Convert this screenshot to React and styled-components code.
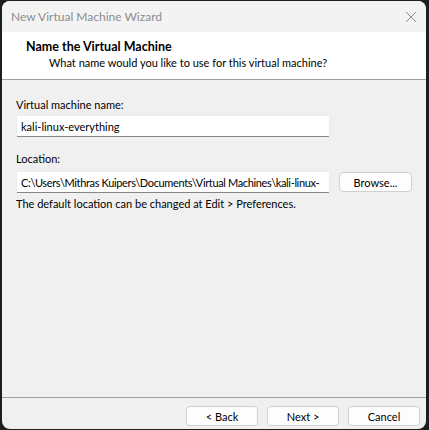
import React from "react";
import styled, { createGlobalStyle } from "styled-components";

const Global = createGlobalStyle`
  html, body { margin: 0; padding: 0; background: #1e1e1e; }
  body { width: 429px; height: 430px; overflow: hidden; font-family: Lato, "Liberation Sans", sans-serif; font-size: 11px; }
`;

const Window = styled.div`
  margin: 1px 3px 1px 2px;
  height: 428px;
  border-radius: 8px;
  overflow: hidden;
  background: #f0f0f0;
  display: flex;
  flex-direction: column;
`;

const TitleBar = styled.div`
  height: 31px;
  background: #f3f3f3;
  display: flex;
  align-items: center;
  justify-content: space-between;
  padding: 0 8px 0 9px;
`;

const TitleText = styled.span`
  color: #8c8c8c;
  font-size: 12px;
`;

const CloseButton = styled.div`
  width: 14px;
  height: 14px;
  display: flex;
  align-items: center;
  justify-content: center;
`;

const Header = styled.div`
  height: 48px;
  background: #ffffff;
  border-bottom: 1px solid #a0a0a0;
  display: flex;
  flex-direction: column;
  padding: 7px 0 0 24px;
  box-sizing: border-box;
`;

const HeaderTitle = styled.div`
  font-weight: bold;
  font-size: 12.5px;
  color: #000;
  line-height: 16px;
`;

const HeaderSub = styled.div`
  color: #000;
  line-height: 16px;
  padding-left: 23px;
`;

const Body = styled.div`
  flex: 1;
  padding: 17px 14px 0 14px;
  display: flex;
  flex-direction: column;
`;

const Label = styled.div`
  line-height: 16px;
  color: #000;
  margin-top: ${(p) => p.$top || 0}px;
`;

const Row = styled.div`
  display: flex;
  align-items: center;
  gap: 9px;
  margin-top: ${(p) => p.$top || 0}px;
`;

const TextBox = styled.div`
  width: 314px;
  height: 22px;
  box-sizing: border-box;
  background: #ffffff;
  border: 1px solid #ececec;
  border-bottom: 1px solid #868686;
  border-radius: 2px;
  padding: 0 3px 0 4px;
  display: flex;
  align-items: center;
  white-space: nowrap;
  overflow: hidden;
  color: #000;
  letter-spacing: ${(p) => (p.$tight ? "-0.35px" : "normal")};
  margin-top: ${(p) => p.$top || 0}px;
`;

const Button = styled.div`
  width: ${(p) => p.$w || 72}px;
  height: 20px;
  box-sizing: border-box;
  background: #fdfdfd;
  border: 1px solid #d0d0d0;
  border-radius: 4px;
  display: flex;
  align-items: center;
  justify-content: center;
  color: #000;
`;

const Footer = styled.div`
  border-top: 1px solid #a0a0a0;
  height: 32px;
  box-sizing: border-box;
  display: flex;
  justify-content: flex-end;
  align-items: flex-start;
  gap: 9px;
  padding: 8px 6px 0 0;
`;

export default function App() {
  return (
    <>
      <Global />
      <Window>
        <TitleBar>
          <TitleText>New Virtual Machine Wizard</TitleText>
          <CloseButton>
            <svg width="12" height="12" viewBox="0 0 12 12">
              <path d="M1 1 L11 11 M11 1 L1 11" stroke="#8a8a8a" strokeWidth="1" fill="none" />
            </svg>
          </CloseButton>
        </TitleBar>
        <Header>
          <HeaderTitle>Name the Virtual Machine</HeaderTitle>
          <HeaderSub>What name would you like to use for this virtual machine?</HeaderSub>
        </Header>
        <Body>
          <Label>Virtual machine name:</Label>
          <TextBox $top={2}>kali-linux-everything</TextBox>
          <Label $top={14}>Location:</Label>
          <Row $top={4}>
            <TextBox $tight>C:\Users\Mithras Kuipers\Documents\Virtual Machines\kali-linux-</TextBox>
            <Button $w={73}>Browse...</Button>
          </Row>
          <Label $top={3}>The default location can be changed at Edit &gt; Preferences.</Label>
        </Body>
        <Footer>
          <Button>&lt; Back</Button>
          <Button>Next &gt;</Button>
          <Button>Cancel</Button>
        </Footer>
      </Window>
    </>
  );
}
